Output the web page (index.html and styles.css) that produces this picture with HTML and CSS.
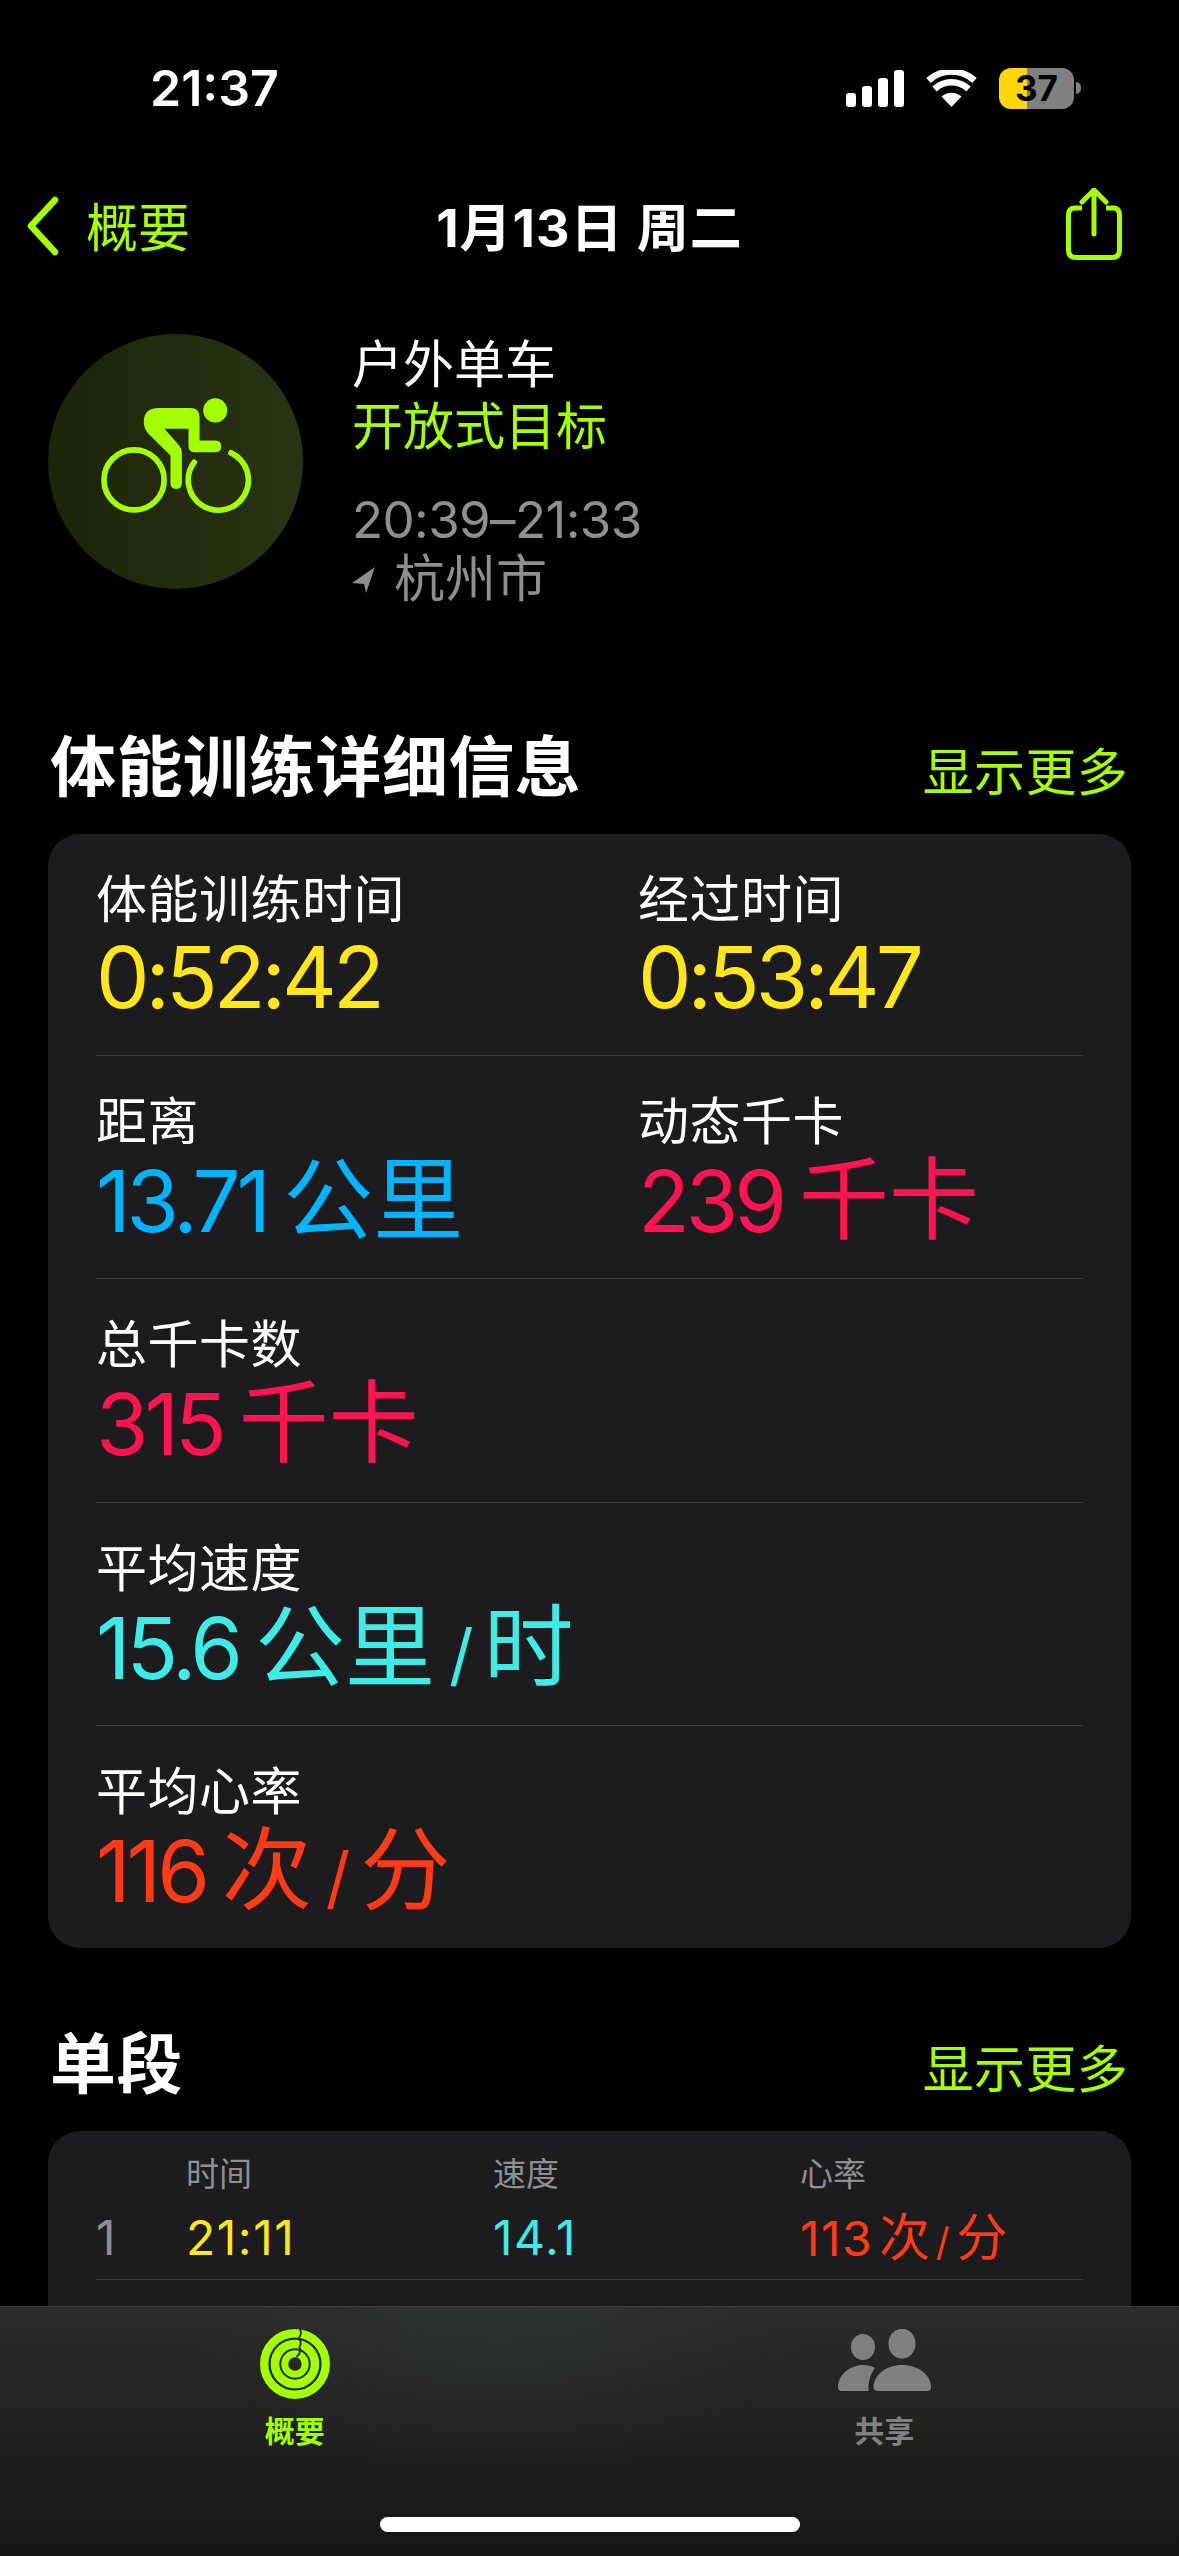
FILE: index.html
```html
<!DOCTYPE html>
<html lang="zh-CN">
<head>
    <meta charset="UTF-8">
    <meta name="viewport" content="width=device-width, initial-scale=1.0">
    <title>体能训练详细信息</title>
    <link rel="stylesheet" href="styles.css">
</head>
<body>
    <div class="status">
        <span class="clock">21:37</span>
        <div class="status-icons">
            <svg class="signal" width="58" height="37" viewBox="0 0 58 37">
                <rect x="0" y="23" width="10" height="14" rx="3"/>
                <rect x="16" y="16" width="10" height="21" rx="3"/>
                <rect x="32" y="8" width="10" height="29" rx="3"/>
                <rect x="48" y="0" width="10" height="37" rx="3"/>
            </svg>
            <svg class="wifi" width="51" height="37" viewBox="0 0 51 37">
                <path d="M25.5 37 L15.5 26.5 A15 15 0 0 1 35.5 26.5 Z" fill="#fff"/>
                <path d="M8.5 19 A25 25 0 0 1 42.5 19" fill="none" stroke="#fff" stroke-width="6.5"/>
                <path d="M2.5 10.5 A34 34 0 0 1 48.5 10.5" fill="none" stroke="#fff" stroke-width="6.5"/>
            </svg>
            <div class="battery">
                <div class="battery-body">37</div>
                <div class="battery-cap"></div>
            </div>
        </div>
    </div>

    <div class="nav">
        <div class="nav-back">
            <svg class="nav-chevron" width="36" height="60" viewBox="0 0 36 60">
                <path d="M30 4 L6 30 L30 56" fill="none" stroke="#a4ff00" stroke-width="6.5" stroke-linecap="round" stroke-linejoin="round"/>
            </svg>
            <span>概要</span>
        </div>
        <div class="nav-title">1月13日 周二</div>
        <svg class="nav-share" width="56" height="72" viewBox="0 0 56 72">
            <path d="M16 20 H9 Q2.5 20 2.5 27 V62 Q2.5 69.5 10 69.5 H46 Q53.5 69.5 53.5 62 V27 Q53.5 20 47 20 H40" fill="none" stroke="#a4ff00" stroke-width="5"/>
            <path d="M28 46 V2 M16 14 L28 2 L40 14" fill="none" stroke="#a4ff00" stroke-width="5" stroke-linecap="round" stroke-linejoin="round"/>
        </svg>
    </div>

    <div class="hero">
        <div class="hero-badge">
            <svg class="bike" width="152" height="117" viewBox="90 85 455 350">
                <circle cx="435" cy="125" r="36" fill="#a4ff00"/>
                <path d="M265 118 H360 Q388 118 388 146 V215 H436 Q453 215 453 233 Q453 250 436 250 H375 Q355 250 355 232 V180 H283 L327 230 Q335 240 335 250 V343 Q335 360 318 360 Q301 360 301 343 V260 L235 195 Q221 180 221 160 Q221 118 265 118 Z" fill="#a4ff00"/>
                <circle cx="192" cy="333" r="90" fill="none" stroke="#a4ff00" stroke-width="17"/>
                <path d="M372 280 A90 90 0 1 0 482 252" fill="none" stroke="#a4ff00" stroke-width="17" stroke-linecap="round"/>
            </svg>
        </div>
        <div class="hero-text">
            <div class="hero-line">户外单车</div>
            <div class="hero-line lime">开放式目标</div>
            <div class="hero-line grey hero-time">20:39–21:33</div>
            <div class="hero-line grey hero-place">
                <svg width="23" height="26" viewBox="0 0 23 26"><path d="M23 0 L0 16 L12 17 L14 26 Z" fill="#8e8e93"/></svg>
                <span>杭州市</span>
            </div>
        </div>
    </div>

    <div class="section-head">
        <h2>体能训练详细信息</h2>
        <span class="more">显示更多</span>
    </div>
    <div class="card">
        <div class="stat-row">
            <div class="stat">
                <div class="stat-label">体能训练时间</div>
                <div class="stat-value yellow">0:52:42</div>
            </div>
            <div class="stat">
                <div class="stat-label">经过时间</div>
                <div class="stat-value yellow">0:53:47</div>
            </div>
        </div>
        <div class="stat-row">
            <div class="stat">
                <div class="stat-label">距离</div>
                <div class="stat-value blue">13.71<span class="unit">公里</span></div>
            </div>
            <div class="stat">
                <div class="stat-label">动态千卡</div>
                <div class="stat-value pink">239<span class="unit">千卡</span></div>
            </div>
        </div>
        <div class="stat-row">
            <div class="stat">
                <div class="stat-label">总千卡数</div>
                <div class="stat-value pink">315<span class="unit">千卡</span></div>
            </div>
        </div>
        <div class="stat-row">
            <div class="stat">
                <div class="stat-label">平均速度</div>
                <div class="stat-value cyan">15.6<span class="unit">公里</span><span class="slash">/</span><span class="unit-end">时</span></div>
            </div>
        </div>
        <div class="stat-row">
            <div class="stat">
                <div class="stat-label">平均心率</div>
                <div class="stat-value red">116<span class="unit">次</span><span class="slash">/</span><span class="unit-end">分</span></div>
            </div>
        </div>
    </div>

    <div class="section-head">
        <h2>单段</h2>
        <span class="more">显示更多</span>
    </div>
    <div class="card">
        <div class="split-head">
            <span></span>
            <span>时间</span>
            <span>速度</span>
            <span>心率</span>
        </div>
        <div class="split-row">
            <span class="grey">1</span>
            <span class="yellow">21:11</span>
            <span class="cyan">14.1</span>
            <span class="red">113<span class="unit">次</span><span class="slash">/</span><span class="unit-end">分</span></span>
        </div>
        <div class="split-row">
            <span class="grey">2</span>
            <span class="yellow">17:27</span>
            <span class="cyan">17.5</span>
            <span></span>
        </div>
    </div>

    <div class="tabbar">
        <div class="tab tab-active">
            <svg width="70" height="70" viewBox="0 0 70 70">
                <circle cx="35" cy="35" r="30.8" fill="none" stroke="#a4ff00" stroke-width="8.4"/>
                <circle cx="35" cy="35" r="20" fill="none" stroke="#a4ff00" stroke-width="8.6"/>
                <circle cx="35" cy="35" r="10.2" fill="none" stroke="#a4ff00" stroke-width="7"/>
                <path d="M40 0 Q42.5 5 38.5 9.5 Q42.5 13 39.5 18 Q42 23 36.5 28" fill="none" stroke="#2b2b27" stroke-width="1.8"/>
            </svg>
            <span>概要</span>
        </div>
        <div class="tab">
            <svg width="93" height="70" viewBox="0 0 93 70">
                <ellipse cx="64" cy="14.7" rx="13.5" ry="15" fill="#808080"/>
                <ellipse cx="25" cy="18" rx="12" ry="13" fill="#808080"/>
                <path d="M35.5 58 C36 46 48 36 64 36 C80 36 93 46 93 58 Q93 62 89 62 H40 Q35.5 62 35.5 58 Z" fill="#808080"/>
                <path d="M0 58 C0 46 12 36 25 36 C30 36 34 37 37 39 C33 44 30 52 30.5 62 H4 Q0 62 0 58 Z" fill="#808080"/>
            </svg>
            <span>共享</span>
        </div>
        <div class="home-bar"></div>
    </div>
</body>
</html>
```

FILE: styles.css
```css
* {
    box-sizing: border-box;
}

html, body {
    margin: 0;
    padding: 0;
    height: 2556px;
    overflow: hidden;
}

body {
    position: relative;
    background: #000;
    color: #fff;
    font-family: Inter, "Noto Sans CJK SC", sans-serif;
    font-size: 51px;
}

.yellow { color: #ffe619; }
.blue { color: #00b4ff; }
.pink { color: #ff1351; }
.cyan { color: #3decE6; }
.red { color: #ff3a14; }
.grey { color: #8e8e93; }
.lime { color: #a4ff00; }

/* status bar */
.status {
    height: 176px;
    padding: 0 98px 0 150px;
    display: flex;
    justify-content: space-between;
    align-items: center;
}

.clock {
    font-size: 50px;
    font-weight: 600;
}

.status-icons {
    display: flex;
    align-items: center;
    gap: 22px;
}

.signal {
    fill: #fff;
}

.battery {
    display: flex;
    align-items: center;
    gap: 2px;
}

.battery-body {
    width: 75px;
    height: 41px;
    border-radius: 12px;
    background: linear-gradient(90deg, #ffd60a 37%, #808080 37%);
    color: #000;
    font-size: 35px;
    font-weight: 700;
    line-height: 41px;
    text-align: center;
}

.battery-cap {
    width: 5px;
    height: 12px;
    background: #808080;
    border-radius: 0 6px 6px 0;
}

/* nav */
.nav {
    height: 104px;
    margin-top: -4px;
    padding: 0 40px;
    display: grid;
    grid-template-columns: 1fr auto 1fr;
    align-items: center;
}

.nav-back {
    display: flex;
    align-items: center;
    gap: 25px;
    margin-left: -15px;
    font-size: 52px;
    color: #a4ff00;
}

.nav-chevron {
    margin-top: 3px;
}

.nav-title {
    font-size: 52px;
    font-weight: 700;
    letter-spacing: 1px;
}

.nav-share {
    justify-self: end;
    margin-right: 17px;
}

/* workout header */
.hero {
    padding: 58px 0 41px 48px;
    display: flex;
    gap: 49px;
}

.hero-badge {
    width: 255px;
    height: 255px;
    border-radius: 50%;
    background: linear-gradient(90deg, #1c2409, #2a3313);
    display: flex;
    align-items: center;
    justify-content: center;
}

.bike {
    margin-bottom: 12px;
}

.hero-line {
    line-height: 62px;
}

.hero-time {
    margin-top: 31px;
    letter-spacing: -0.6px;
}

.hero-place {
    display: flex;
    align-items: center;
    gap: 19px;
    margin-top: -3px;
}

.hero-place svg {
    margin-top: 2px;
}

/* sections */
.section-head {
    height: 90px;
    margin-top: 71px;
    margin-bottom: 22px;
    padding: 0 51px 0 50px;
    display: flex;
    justify-content: space-between;
    align-items: baseline;
}

.section-head h2 {
    margin: 0;
    font-size: 66px;
    font-weight: 700;
    line-height: 90px;
    letter-spacing: 0.4px;
}

.more {
    color: #a4ff00;
    letter-spacing: 0.3px;
}

.card {
    margin: 0 48px;
    padding: 0 48px;
    background: #1c1c1e;
    border-radius: 32px;
}

.stat-row {
    display: grid;
    grid-template-columns: 542px 1fr;
    height: 223.4px;
    padding-top: 38px;
    border-bottom: 1px solid #3a3a3c;
}

.stat-row:first-child {
    height: 222px;
}

.stat-row:last-child {
    height: 222px;
    border-bottom: none;
}

.stat-label {
    line-height: 56px;
    letter-spacing: 0.5px;
}

.stat-value {
    font-size: 85px;
    line-height: 100px;
    letter-spacing: -4px;
    white-space: nowrap;
}

.stat-value .unit,
.stat-value .unit-end {
    font-size: 90px;
    letter-spacing: 0;
}

.stat-value .unit {
    margin-left: 16px;
}

.stat-value .slash {
    margin: 0 10px 0 14px;
    font-size: 68px;
    letter-spacing: 0;
}

/* splits table */
.split-head,
.split-row {
    display: grid;
    grid-template-columns: 90px 307px 307px 1fr;
}

.split-head {
    padding-top: 24px;
    font-size: 33px;
    line-height: 38px;
    color: #8e8e93;
}

.split-row {
    padding: 16px 0 13px;
    font-size: 48px;
    line-height: 60px;
    letter-spacing: 1.5px;
    border-bottom: 1px solid #3a3a3c;
}

.split-head + .split-row {
    padding: 15px 0 7px;
}

.split-row .unit,
.split-row .unit-end {
    font-size: 51px;
    letter-spacing: 0;
}

.split-row .unit {
    margin-left: 0.12em;
}

.split-row .slash {
    margin: 0 0.14em;
    font-size: 0.8em;
}

/* tab bar */
.tabbar {
    position: absolute;
    left: 0;
    right: 0;
    bottom: 0;
    height: 250px;
    padding-top: 22px;
    display: grid;
    grid-template-columns: 1fr 1fr;
    align-content: start;
    border-top: 1px solid #3e3e3e;
    background:
        radial-gradient(ellipse 300px 150px at 500px 20px, rgba(60, 90, 90, 0.18), transparent),
        linear-gradient(180deg, #2b2b29, #161616);
}

.tab {
    display: flex;
    flex-direction: column;
    align-items: center;
    gap: 10px;
    color: #808080;
    font-size: 30px;
    font-weight: 700;
    line-height: 44px;
}

.tab-active {
    color: #a4ff00;
}

.home-bar {
    position: absolute;
    left: 380px;
    bottom: 24px;
    width: 420px;
    height: 15px;
    border-radius: 8px;
    background: #fff;
}
```
